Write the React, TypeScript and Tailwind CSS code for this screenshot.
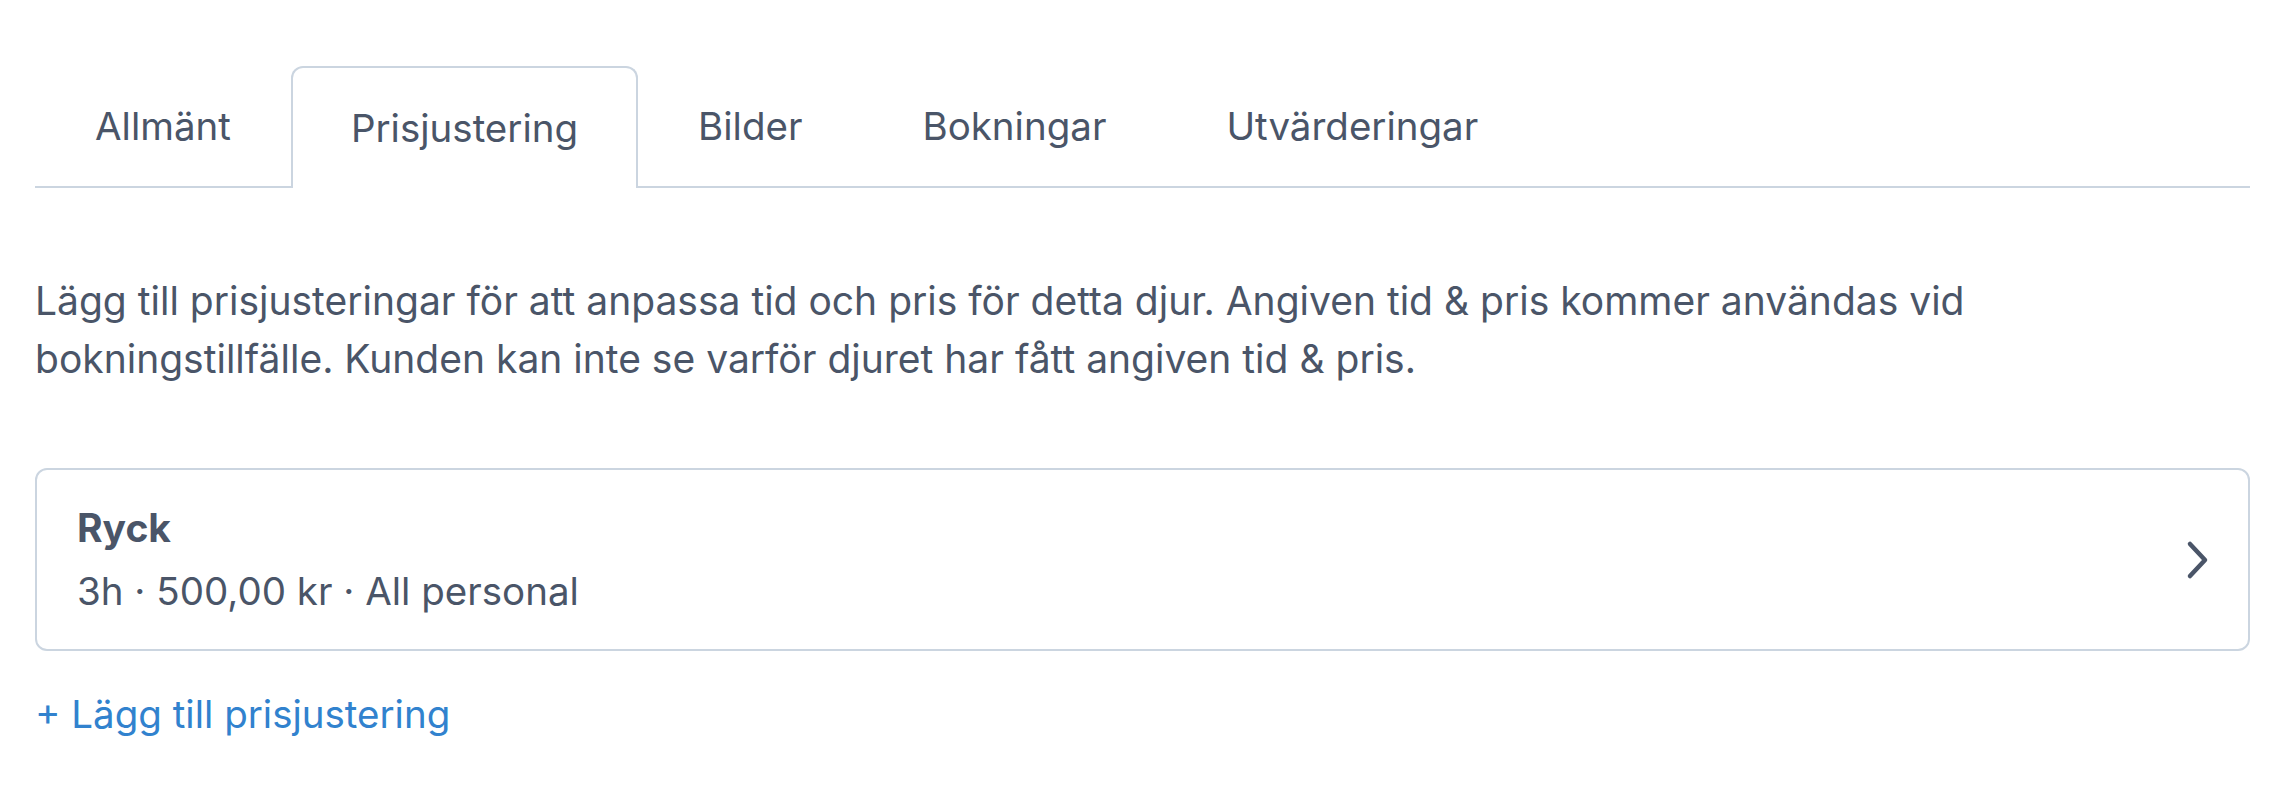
const tabs = ['Allmänt', 'Prisjustering', 'Bilder', 'Bokningar', 'Utvärderingar'];

export default function App() {
  const active = 1;

  return (
    <div className="min-h-screen bg-white pl-[35px] pr-[44px] pt-[66px] text-[#4a5568] font-['Inter',sans-serif]">
      <div className="flex border-b-2 border-[#cbd5e0]">
        {tabs.map((t, i) => (
          <div
            key={t}
            className={
              i === active
                ? '-mb-[2px] flex h-[122px] items-center rounded-t-[12px] border-2 border-b-0 border-[#cbd5e0] bg-white px-[58px] pt-[2px] text-[38.5px]'
                : '-mb-[2px] flex h-[122px] items-center border-2 border-transparent px-[58px] text-[38.5px]'
            }
          >
            {t}
          </div>
        ))}
      </div>

      <p className="mt-[84px] max-w-[1960px] text-[39px] leading-[58px]">
        Lägg till prisjusteringar för att anpassa tid och pris för detta djur. Angiven tid &amp; pris kommer användas vid bokningstillfälle. Kunden kan inte se varför djuret har fått angiven tid &amp; pris.
      </p>

      <div className="mt-[80px] flex h-[183px] items-center justify-between rounded-[12px] border-2 border-[#cbd5e0] pl-[40px] pr-[38px]">
        <div className="flex flex-col">
          <span className="text-[39px] font-bold leading-[48px]">Ryck</span>
          <span className="mt-[15px] text-[38.5px] leading-[48px]">3h · 500,00 kr · All personal</span>
        </div>
        <svg width="24" height="40" viewBox="0 0 24 40" fill="none" stroke="#4a5568" strokeWidth="4.5" strokeLinecap="round" strokeLinejoin="round">
          <polyline points="4,4 19,20 4,36" />
        </svg>
      </div>

      <button className="mt-[39px] text-[38.5px] leading-[48px] text-[#3182ce]">+ Lägg till prisjustering</button>
    </div>
  );
}
